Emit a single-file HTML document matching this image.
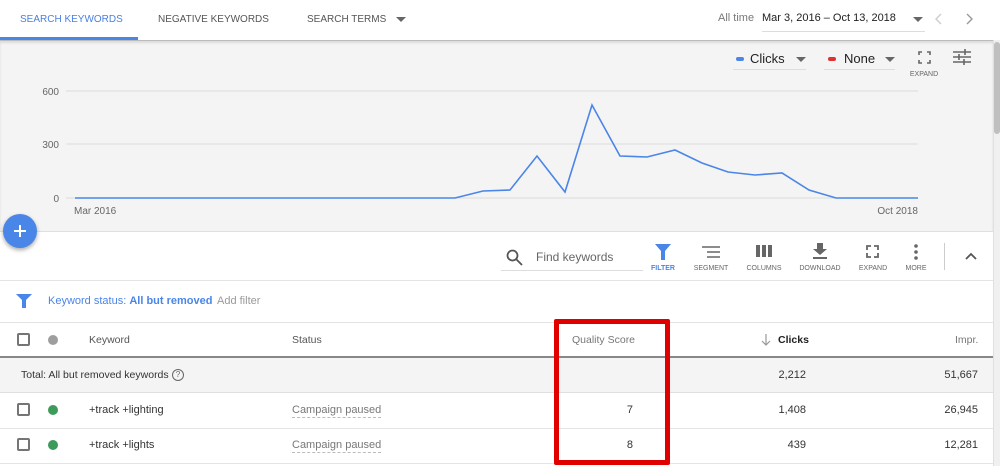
<!DOCTYPE html>
<html><head><style>
*{margin:0;padding:0;box-sizing:border-box}
body{width:1000px;height:466px;overflow:hidden;background:#fff;font-family:"Liberation Sans",sans-serif;position:relative;color:#333}
.a{position:absolute;white-space:nowrap}
.tab{font-size:10px;color:#555;top:14px}
.lbl{font-size:7px;color:#666;text-align:center}
.cb{width:13px;height:13px;border:2px solid #757575;border-radius:2px}
.dot{width:10px;height:10px;border-radius:50%}
.t{font-size:11px;color:#333}
.g{font-size:11px;color:#777}
</style></head><body>
<div class="a tab" style="left:20px;color:#4a7fe0">SEARCH KEYWORDS</div>
<div class="a" style="left:0;top:37px;width:138px;height:3px;background:#4a85e8"></div>
<div class="a tab" style="left:158px">NEGATIVE KEYWORDS</div>
<div class="a tab" style="left:307px">SEARCH TERMS</div>
<div class="a" style="left:396px;top:17px;border-left:5px solid transparent;border-right:5px solid transparent;border-top:5px solid #666"></div>
<div class="a" style="left:718px;top:12px;font-size:11px;color:#777">All time</div>
<div class="a" style="left:762px;top:12px;font-size:11px;color:#222">Mar 3, 2016 – Oct 13, 2018</div>
<div class="a" style="left:762px;top:31px;width:163px;height:1px;background:#ddd"></div>
<div class="a" style="left:913px;top:17px;border-left:5px solid transparent;border-right:5px solid transparent;border-top:5px solid #666"></div>
<svg class="a" style="left:935px;top:13px" width="8" height="12" fill="none" stroke="#ccc" stroke-width="1.4"><path d="M6 1L1 6l5 5"/></svg>
<svg class="a" style="left:965px;top:13px" width="8" height="12" fill="none" stroke="#999" stroke-width="1.4"><path d="M2 1l5 5-5 5"/></svg>
<div class="a" style="left:0;top:40px;width:993px;height:192px;background:#f4f4f4;border-top:1px solid #bbb;box-shadow:inset 0 2px 2px rgba(0,0,0,.1);border-bottom:1px solid #e0e0e0"></div>
<div class="a" style="left:993px;top:40px;width:7px;height:426px;background:#f0f0f0;border-left:1px solid #e0e0e0"></div>
<div class="a" style="left:994px;top:42px;width:6px;height:92px;background:#bfbfbf;border-radius:3px"></div>
<div class="a" style="left:736px;top:57px;width:8px;height:4px;background:#4a85e8;border-radius:2px"></div>
<div class="a" style="left:750px;top:51px;font-size:13px;color:#222">Clicks</div>
<div class="a" style="left:796px;top:57px;border-left:5px solid transparent;border-right:5px solid transparent;border-top:5px solid #666"></div>
<div class="a" style="left:733px;top:69px;width:73px;height:1px;background:#ddd"></div>
<div class="a" style="left:828px;top:57px;width:8px;height:4px;background:#d33;border-radius:2px"></div>
<div class="a" style="left:844px;top:51px;font-size:13px;color:#222">None</div>
<div class="a" style="left:885px;top:57px;border-left:5px solid transparent;border-right:5px solid transparent;border-top:5px solid #666"></div>
<div class="a" style="left:824px;top:69px;width:71px;height:1px;background:#ddd"></div>
<svg class="a" style="left:918px;top:51px" width="13" height="13" viewBox="0 0 13 13" fill="none" stroke="#666" stroke-width="1.6"><path d="M1 4V1h3M9 1h3v3M12 9v3H9M4 12H1V9"/></svg>
<div class="a lbl" style="left:908px;top:71px;width:32px">EXPAND</div>
<svg class="a" style="left:953px;top:49px" width="18" height="16" viewBox="0 0 18 16" stroke="#666" stroke-width="1.6"><path d="M0 3h18M0 8h18M0 13h18"/><path d="M12 0v6M6 5v6M11 10v6"/></svg>
<svg class="a" style="left:0;top:80px" width="993" height="145">
<g stroke="#ddd" stroke-width="1"><line x1="66" y1="11" x2="918" y2="11"/><line x1="66" y1="64" x2="918" y2="64"/><line x1="66" y1="118" x2="918" y2="118"/></g>
<g font-family="Liberation Sans" font-size="10" fill="#666"><text x="59" y="15" text-anchor="end">600</text><text x="59" y="68" text-anchor="end">300</text><text x="59" y="122" text-anchor="end">0</text><text x="74" y="134">Mar 2016</text><text x="918" y="134" text-anchor="end">Oct 2018</text></g>
<polyline fill="none" stroke="#4a85e8" stroke-width="1.6" points="75,118 455,118 483,111 510,110 537,76 565,112 592,25 620,76 647,77 675,70 702,83 728,92 755,95 782,93 809,110 836,118 918,118"/>
</svg>
<div class="a" style="left:3px;top:214px;width:34px;height:34px;border-radius:50%;background:#4a85e8;box-shadow:0 2px 4px rgba(0,0,0,.35)"></div>
<svg class="a" style="left:13px;top:224px" width="14" height="14" stroke="#fff" stroke-width="2"><path d="M7 1v12M1 7h12"/></svg>
<svg class="a" style="left:506px;top:249px" width="17" height="17" viewBox="0 0 17 17" fill="none" stroke="#555" stroke-width="1.8"><circle cx="6.5" cy="6.5" r="5"/><path d="M10 10l6 6"/></svg>
<div class="a" style="left:536px;top:250px;font-size:12px;color:#666">Find keywords</div>
<div class="a" style="left:501px;top:270px;width:142px;height:1px;background:#ddd"></div>
<svg class="a" style="left:655px;top:244px" width="16" height="16" viewBox="0 0 16 16"><path d="M0 0h16L10 7v9H6V7z" fill="#4a85e8"/></svg>
<div class="a lbl" style="left:648px;top:265px;width:30px;color:#4a85e8;font-weight:bold">FILTER</div>
<svg class="a" style="left:702px;top:246px" width="18" height="12" stroke="#666" stroke-width="1.6"><path d="M0 1h18M5 6h13M5 11h13"/></svg>
<div class="a lbl" style="left:691px;top:265px;width:40px">SEGMENT</div>
<svg class="a" style="left:756px;top:245px" width="16" height="12" fill="#666"><rect x="0" y="0" width="4" height="12"/><rect x="6" y="0" width="4" height="12"/><rect x="12" y="0" width="4" height="12"/></svg>
<div class="a lbl" style="left:744px;top:265px;width:40px">COLUMNS</div>
<svg class="a" style="left:813px;top:243px" width="14" height="16" fill="#666"><path d="M4 0h6v6h4L7 12 0 6h4z"/><rect x="0" y="14" width="14" height="2"/></svg>
<div class="a lbl" style="left:798px;top:265px;width:44px">DOWNLOAD</div>
<svg class="a" style="left:866px;top:245px" width="13" height="13" fill="none" stroke="#666" stroke-width="1.8"><path d="M1 5V1h4M8 1h4v4M12 8v4H8M5 12H1V8"/></svg>
<div class="a lbl" style="left:857px;top:265px;width:32px">EXPAND</div>
<svg class="a" style="left:913px;top:244px" width="6" height="16" fill="#666"><circle cx="3" cy="2" r="1.8"/><circle cx="3" cy="8" r="1.8"/><circle cx="3" cy="14" r="1.8"/></svg>
<div class="a lbl" style="left:902px;top:265px;width:28px">MORE</div>
<div class="a" style="left:944px;top:243px;width:1px;height:27px;background:#ccc"></div>
<svg class="a" style="left:965px;top:252px" width="12" height="8" fill="none" stroke="#555" stroke-width="1.8"><path d="M1 7l5-5 5 5"/></svg>
<div class="a" style="left:0;top:280px;width:993px;height:1px;background:#e4e4e4"></div>
<svg class="a" style="left:16px;top:294px" width="16" height="14"><path d="M0 0h16L10 6v8H6V6z" fill="#4a85e8"/></svg>
<div class="a" style="left:48px;top:295px;font-size:11px;color:#4a85e8">Keyword status: <b>All but removed</b></div>
<div class="a" style="left:217px;top:295px;font-size:11px;color:#999">Add filter</div>
<div class="a" style="left:0;top:322px;width:993px;height:1px;background:#e4e4e4"></div>
<div class="a cb" style="left:17px;top:333px"></div>
<div class="a dot" style="left:48px;top:335px;background:#9e9e9e"></div>
<div class="a g" style="left:89px;top:334px;font-size:10.5px;color:#555">Keyword</div>
<div class="a g" style="left:292px;top:334px;font-size:10.5px;color:#555">Status</div>
<div class="a g" style="left:572px;top:334px;font-size:10.5px">Quality Score</div>
<svg class="a" style="left:761px;top:334px" width="10" height="12" fill="none" stroke="#999" stroke-width="1.2"><path d="M5 0v11M1 7l4 4 4-4"/></svg>
<div class="a" style="left:778px;top:334px;font-size:10.5px;font-weight:bold;color:#222">Clicks</div>
<div class="a g" style="left:955px;top:334px;font-size:10.5px">Impr.</div>
<div class="a" style="left:0;top:356px;width:993px;height:2px;background:#888"></div>
<div class="a" style="left:0;top:358px;width:993px;height:35px;background:#f4f4f4;border-bottom:1px solid #e0e0e0"></div>
<div class="a t" style="left:21px;top:369px;font-size:10.5px">Total: All but removed keywords</div>
<div class="a" style="left:172px;top:369px;width:12px;height:12px;border:1.3px solid #666;border-radius:50%;font-size:8px;line-height:10px;text-align:center;color:#666">?</div>
<div class="a t" style="left:740px;top:369px;width:66px;text-align:right">2,212</div>
<div class="a t" style="left:900px;top:369px;width:78px;text-align:right">51,667</div>
<div class="a cb" style="left:17px;top:403px"></div>
<div class="a dot" style="left:48px;top:405px;background:#3c9a5a"></div>
<div class="a t" style="left:89px;top:404px">+track +lighting</div>
<div class="a g" style="left:292px;top:404px;border-bottom:1px dashed #bbb;padding-bottom:1px">Campaign paused</div>
<div class="a t" style="left:590px;top:404px;width:43px;text-align:right">7</div>
<div class="a t" style="left:740px;top:404px;width:66px;text-align:right">1,408</div>
<div class="a t" style="left:900px;top:404px;width:78px;text-align:right">26,945</div>
<div class="a" style="left:0;top:428px;width:993px;height:1px;background:#e4e4e4"></div>
<div class="a cb" style="left:17px;top:438px"></div>
<div class="a dot" style="left:48px;top:440px;background:#3c9a5a"></div>
<div class="a t" style="left:89px;top:439px">+track +lights</div>
<div class="a g" style="left:292px;top:439px;border-bottom:1px dashed #bbb;padding-bottom:1px">Campaign paused</div>
<div class="a t" style="left:590px;top:439px;width:43px;text-align:right">8</div>
<div class="a t" style="left:740px;top:439px;width:66px;text-align:right">439</div>
<div class="a t" style="left:900px;top:439px;width:78px;text-align:right">12,281</div>
<div class="a" style="left:0;top:463px;width:993px;height:1px;background:#e4e4e4"></div>
<div class="a" style="left:554px;top:319px;width:116px;height:146px;border:5px solid #e00000;border-radius:2px"></div>
</body></html>
